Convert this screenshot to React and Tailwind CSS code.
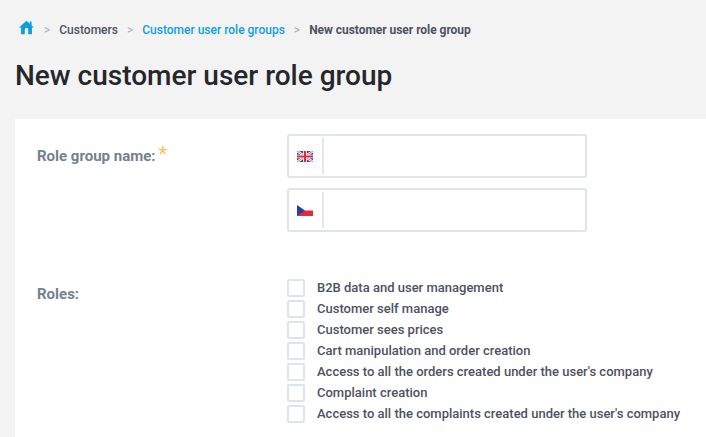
const roles = [
  "B2B data and user management",
  "Customer self manage",
  "Customer sees prices",
  "Cart manipulation and order creation",
  "Access to all the orders created under the user's company",
  "Complaint creation",
  "Access to all the complaints created under the user's company",
];

const UkFlag = () => (
  <svg width="16" height="11" viewBox="0 0 16 11">
    <rect width="16" height="11" fill="#2f4a9c" />
    <path d="M0 0L16 11M16 0L0 11" stroke="#fff" strokeWidth="2.4" />
    <path d="M0 0L16 11M16 0L0 11" stroke="#e0455a" strokeWidth="0.8" />
    <path d="M8 0V11M0 5.5H16" stroke="#fff" strokeWidth="3.6" />
    <path d="M8 0V11M0 5.5H16" stroke="#e5283c" strokeWidth="2" />
  </svg>
);

const CzFlag = () => (
  <svg width="16" height="11" viewBox="0 0 16 11">
    <rect width="16" height="5.5" fill="#fff" />
    <rect y="5.5" width="16" height="5.5" fill="#e5283c" />
    <path d="M0 0L8 5.5L0 11Z" fill="#24409a" />
  </svg>
);

const Field = ({ flag }) => (
  <div className="flex items-center w-[300px] h-[44px] bg-white border-2 border-[#dfe3ec] rounded-[3px]">
    <div className="flex items-center pl-[8px] w-[35px] h-[36px] border-r-2 border-[#e3e8f0]">{flag}</div>
  </div>
);

export default function App() {
  return (
    <div className="w-[706px] h-[437px] overflow-hidden bg-[#f3f3f3] font-['Roboto',sans-serif]">
      <div className="flex items-center h-[16px] mt-[22px] ml-[19px] text-[12px] font-medium">
        <svg width="15" height="15" viewBox="0 0 16 16" className="-mt-[5px]">
          <path
            fill="#0d9ee0"
            d="M8 .8L0 8h2.2v7.2h4V10a1.8 1.8 0 0 1 3.6 0v5.2h4V8H16l-2.6-2.3V1.6h-2v2.3z"
          />
        </svg>
        <span className="ml-[10px] text-[#a9acb2] font-normal">&gt;</span>
        <span className="ml-[9px] text-[#4d5261]">Customers</span>
        <span className="ml-[9px] text-[#a9acb2] font-normal">&gt;</span>
        <span className="ml-[9px] text-[#0f9fe3]">Customer user role groups</span>
        <span className="ml-[9px] text-[#a9acb2] font-normal">&gt;</span>
        <span className="ml-[9px] text-[#4d5261] font-bold tracking-[-0.03px]">New customer user role group</span>
      </div>
      <h1 className="mt-[20px] ml-[15px] text-[28px] leading-[36px] font-medium text-[#25272b]">
        New customer user role group
      </h1>
      <div className="mt-[25px] ml-[15px] bg-white h-[400px] pt-[15px]">
        <div className="flex">
          <div className="w-[272px] pl-[22px] pt-[11px] text-[15px] font-bold text-[#76808f]">
            Role group name:<span className="ml-[3px] text-[#f8c55f] text-[20px] font-normal leading-[14px]">*</span>
          </div>
          <div className="flex flex-col gap-[10px]">
            <Field flag={<UkFlag />} />
            <Field flag={<CzFlag />} />
          </div>
        </div>
        <div className="flex mt-[45px]">
          <div className="w-[272px] pl-[22px] pt-[6px] text-[15px] font-bold text-[#76808f]">Roles:</div>
          <div className="flex flex-col">
            {roles.map((role) => (
              <div key={role} className="flex items-center h-[21px]">
                <div className="w-[18px] h-[18px] bg-white border-2 border-[#dfe3ec] rounded-[2px]"></div>
                <span className="ml-[12px] text-[13px] font-medium text-[#4d5261]">{role}</span>
              </div>
            ))}
          </div>
        </div>
      </div>
    </div>
  );
}
